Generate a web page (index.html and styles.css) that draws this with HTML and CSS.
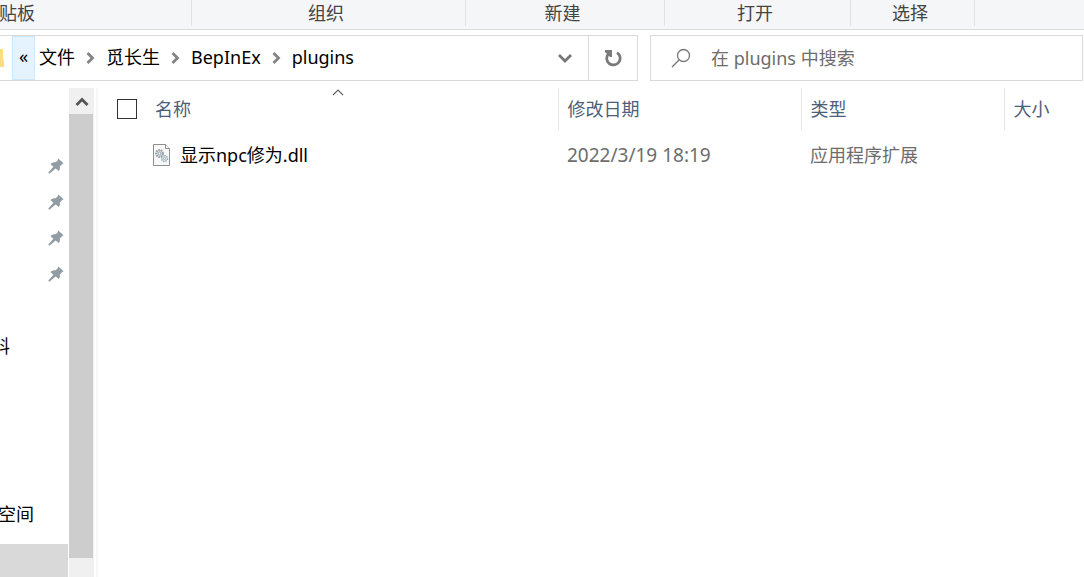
FILE: index.html
```html
<!DOCTYPE html>
<html lang="zh-CN">
<head>
    <meta charset="UTF-8">
    <meta name="viewport" content="width=device-width, initial-scale=1.0">
    <title>plugins</title>
    <link rel="stylesheet" href="styles.css">
</head>
<body>
    <svg class="sprite" aria-hidden="true">
        <symbol id="pin" viewBox="0 0 16 16">
            <path d="M10.2 0.4 L15.6 5.2 L14 6.2 L11.8 8.6 C12.2 10.4 11.8 11.8 10.8 13 L7.6 10.6 L1.4 15.8 L0.2 14.8 L5.4 8.8 L2.4 6 C4 4.4 6 4 7.6 4.2 L9.8 2.2 Z"/>
        </symbol>
        <symbol id="sep" viewBox="0 0 10 12">
            <path d="M2 1 L7 6 L2 11" fill="none" stroke="#838383" stroke-width="2.8"/>
        </symbol>
    </svg>

    <div class="ribbon">
        <div class="group first">剪贴板</div>
        <div class="group">组织</div>
        <div class="group">新建</div>
        <div class="group">打开</div>
        <div class="group">选择</div>
    </div>

    <div class="toolbar">
        <div class="address">
            <svg class="folder" width="4" height="18" viewBox="0 0 4 18"><path d="M0 0 H3 V10 L4 12 V18 H0 Z" fill="#fddc82"/></svg>
            <button type="button" class="more" aria-label="更多">«</button>
            <nav class="crumbs">
                <a href="#">文件</a>
                <svg class="sep"><use href="#sep"/></svg>
                <a href="#">觅长生</a>
                <svg class="sep"><use href="#sep"/></svg>
                <a href="#">BepInEx</a>
                <svg class="sep"><use href="#sep"/></svg>
                <a href="#">plugins</a>
            </nav>
            <button type="button" class="history" aria-label="以前的位置">
                <svg width="14" height="10" viewBox="0 0 14 10"><path d="M1 2 L7 8 L13 2" fill="none" stroke="#777" stroke-width="2.8"/></svg>
            </button>
            <button type="button" class="refresh" aria-label="刷新">
                <svg width="18" height="18" viewBox="0 0 18 18"><path d="M4.6 4.6 A6.7 6.7 0 1 0 13 3.6" fill="none" stroke="#7a7a7a" stroke-width="2.8"/><path d="M1 1 H8 V8 H6 L1 3 Z" fill="#7a7a7a"/></svg>
            </button>
        </div>
        <div class="search">
            <svg width="20" height="20" viewBox="0 0 20 20"><circle cx="12.5" cy="7.5" r="6" fill="none" stroke="#777" stroke-width="1.3"/><path d="M8.2 11.8 L1 19" stroke="#777" stroke-width="1.3"/></svg>
            <input type="text" aria-label="搜索" placeholder="在 plugins 中搜索">
        </div>
    </div>

    <div class="main">
        <div class="sidebar">
            <div class="item pinned"><svg class="pin"><use href="#pin"/></svg></div>
            <div class="item pinned"><svg class="pin"><use href="#pin"/></svg></div>
            <div class="item pinned"><svg class="pin"><use href="#pin"/></svg></div>
            <div class="item pinned"><svg class="pin"><use href="#pin"/></svg></div>
            <div class="item"></div>
            <div class="item cut">料</div>
            <div class="item"></div>
            <div class="item"></div>
            <div class="item"></div>
            <div class="item drive">空间</div>
            <div class="item selected"></div>
        </div>
        <div class="scrollbar">
            <button type="button" aria-label="向上滚动">
                <svg width="14" height="10" viewBox="0 0 14 10"><path d="M1.5 9 L7 3.5 L12.5 9" fill="none" stroke="#555" stroke-width="2.8"/></svg>
            </button>
            <div class="thumb"></div>
        </div>
        <div class="files">
            <table>
                <thead>
                    <tr>
                        <th class="name">
                            <svg class="sort" width="12" height="7" viewBox="0 0 12 7"><path d="M1 6 L6 1 L11 6" fill="none" stroke="#666" stroke-width="1.2"/></svg>
                            <div class="cell"><input type="checkbox" aria-label="全选">名称</div>
                        </th>
                        <th class="date">修改日期</th>
                        <th class="type">类型</th>
                        <th class="size">大小</th>
                    </tr>
                </thead>
                <tbody>
                    <tr>
                        <td>
                            <div class="cell file">
                                <svg width="18" height="22" viewBox="0 0 18 22">
                                    <path d="M0.5 0.5 H12.5 L16.5 4.5 V21.5 H0.5 Z" fill="#f8f8f8" stroke="#8f8f8f"/>
                                    <path d="M12.5 0.5 V4.5 H16.5" fill="#fff" stroke="#8f8f8f"/>
                                    <circle cx="6.5" cy="9.5" r="3.4" fill="#dfe5e9" stroke="#93a0a8" stroke-width="2" stroke-dasharray="1.6 0.8"/>
                                    <circle cx="6.5" cy="9.5" r="1.4" fill="#fff" stroke="#93a0a8"/>
                                    <circle cx="11.5" cy="14.5" r="2.9" fill="#e4f1f8" stroke="#98a9b4" stroke-width="1.6" stroke-dasharray="1.4 0.8"/>
                                    <circle cx="11.5" cy="14.5" r="1" fill="#fff" stroke="#98a9b4"/>
                                </svg>
                                显示npc修为.dll
                            </div>
                        </td>
                        <td class="modified">2022/3/19 18:19</td>
                        <td>应用程序扩展</td>
                        <td></td>
                    </tr>
                </tbody>
            </table>
        </div>
    </div>
</body>
</html>
```
FILE: styles.css
```css
* {
    box-sizing: border-box;
}
body {
    margin: 0;
    height: 100vh;
    display: flex;
    flex-direction: column;
    overflow: hidden;
    background: #fff;
    color: #000;
    font: 18px/26px "Noto Sans", "Noto Sans CJK SC", sans-serif;
}
button {
    border: none;
    background: none;
    padding: 0;
    display: flex;
    align-items: center;
    justify-content: center;
}
.sprite {
    display: none;
}

/* ribbon */
.ribbon {
    display: grid;
    grid-template-columns: 192px 274px 199px 186px 124px;
    height: 30px;
    padding-bottom: 3px;
    background: #f5f6f7;
    border-bottom: 1px solid #d9dadb;
}
.group {
    border-right: 1px solid #e0e1e2;
    padding-right: 5px;
    text-align: center;
    color: #444;
}
.group.first {
    margin-left: -19px;
    text-align: left;
}

/* address and search */
.toolbar {
    display: grid;
    grid-template-columns: 638fr 433fr;
    gap: 12px;
    padding: 5px 1px 7px 0;
}
.address {
    display: flex;
    align-items: stretch;
    height: 46px;
    border: 1px solid #d9d9d9;
    border-left: none;
}
.folder {
    align-self: center;
}
.more {
    width: 23px;
    margin-left: 8px;
    padding-bottom: 4px;
    background: #e5f3ff;
    border: 1px solid #cce8ff;
    font: inherit;
}
.crumbs {
    flex: 1;
    display: flex;
    align-items: center;
    gap: 10px;
    padding: 0 0 2px 4px;
}
.crumbs a {
    color: #000;
    text-decoration: none;
}
.sep {
    width: 11px;
    height: 12px;
    margin-top: 2px;
}
.history {
    width: 46px;
}
.refresh {
    width: 49px;
    border-left: 1px solid #d9d9d9;
}
.search {
    display: flex;
    align-items: center;
    gap: 20px;
    padding-left: 20px;
    border: 1px solid #d9d9d9;
}
.search input {
    flex: 1;
    min-width: 0;
    padding: 0;
    border: none;
    outline: none;
    font: inherit;
}
.search input::placeholder {
    color: #6d6d6d;
}

/* panes */
.main {
    flex: 1;
    display: flex;
    min-height: 0;
}
.sidebar {
    width: 68px;
    padding-top: 60px;
    overflow: hidden;
}
.item {
    display: flex;
    align-items: center;
    height: 36px;
    white-space: nowrap;
}
.pinned {
    justify-content: flex-end;
    padding-right: 4px;
}
.pin {
    width: 16px;
    height: 16px;
    fill: #919ca4;
}
.cut {
    margin-left: -8px;
}
.drive {
    margin-top: 24px;
    margin-left: -2px;
}
.selected {
    margin-top: 12px;
    background: #d9d9d9;
}
.scrollbar {
    display: flex;
    flex-direction: column;
    width: 25px;
    margin-left: 1px;
    background: #f0f0f0;
}
.scrollbar button {
    height: 26px;
}
.thumb {
    flex: 1;
    margin: 0 1px 19px 0;
    background: #cdcdcd;
}
.files {
    flex: 1;
    margin-left: 2px;
    border-left: 2px solid #f7f7f7;
}

/* file list */
table {
    width: 100%;
    table-layout: fixed;
    border-collapse: collapse;
}
th, td {
    padding: 0 9px;
    text-align: left;
    font-weight: normal;
}
th {
    height: 42px;
    color: #4c607a;
    border-right: 1px solid #e5e5e5;
}
th:last-child {
    border-right: none;
}
td {
    height: 50px;
    color: #6d6d6d;
}
th.name {
    position: relative;
    width: 460px;
}
th.date {
    width: 243px;
}
th.type {
    width: 203px;
}
td.modified {
    font-size: 19px;
}
.sort {
    position: absolute;
    left: 51%;
    top: 1px;
}
.cell {
    display: flex;
    align-items: center;
    gap: 18px;
    padding-left: 10px;
}
.cell input {
    appearance: none;
    width: 20px;
    height: 20px;
    margin: 0;
    border: 1px solid #333;
    background: #fff;
}
.file {
    gap: 9px;
    padding-left: 46px;
    color: #000;
}
```
